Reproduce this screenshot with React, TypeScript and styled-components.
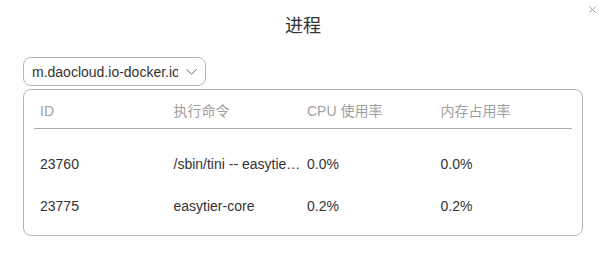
import { createGlobalStyle, styled } from 'styled-components'

const rows = [
  { id: '23760', cmd: '/sbin/tini -- easytier-core --config-server udp://', cpu: '0.0%', mem: '0.0%' },
  { id: '23775', cmd: 'easytier-core', cpu: '0.2%', mem: '0.2%' },
]

function App() {
  return (
    <>
      <GlobalStyle />
      <StyledDialog>
        <StyledClose aria-label="关闭">
          <svg width="7" height="7" viewBox="0 0 7 7">
            <path d="M0.5 0.5 L6.5 6.5 M6.5 0.5 L0.5 6.5" stroke="#9a9a9a" strokeWidth="1" fill="none" />
          </svg>
        </StyledClose>
        <StyledTitle>进程</StyledTitle>
        <StyledSelect>
          <StyledSelectText>m.daocloud.io-docker.io/easytier/easytier</StyledSelectText>
          <svg width="11" height="6" viewBox="0 0 11 6">
            <path d="M0.5 0.5 L5.5 5.2 L10.5 0.5" stroke="#666" strokeWidth="1" fill="none" />
          </svg>
        </StyledSelect>
        <StyledCard>
          <StyledHeadRow>
            <StyledHeadCell>ID</StyledHeadCell>
            <StyledHeadCell>执行命令</StyledHeadCell>
            <StyledHeadCell>CPU 使用率</StyledHeadCell>
            <StyledHeadCell>内存占用率</StyledHeadCell>
          </StyledHeadRow>
          <StyledBody>
            {rows.map((row) => (
              <StyledRow key={row.id}>
                <StyledCell>{row.id}</StyledCell>
                <StyledCell>{row.cmd}</StyledCell>
                <StyledCell>{row.cpu}</StyledCell>
                <StyledCell>{row.mem}</StyledCell>
              </StyledRow>
            ))}
          </StyledBody>
        </StyledCard>
      </StyledDialog>
    </>
  )
}

const GlobalStyle = createGlobalStyle`
  body {
    margin: 0;
    background: #fff;
    font-family: "Liberation Sans", Arial, "Noto Sans CJK SC", sans-serif;
    color: #333;
  }
`

const StyledDialog = styled.div`
  position: relative;
  width: 599px;
  height: 270px;
  box-sizing: border-box;
  padding: 14px 16px 0 23px;
  display: flex;
  flex-direction: column;
  align-items: flex-start;
`

const StyledClose = styled.button`
  position: absolute;
  top: 6px;
  right: 3px;
  padding: 0;
  border: 0;
  background: none;
  display: flex;
  cursor: pointer;
`

const StyledTitle = styled.div`
  align-self: stretch;
  text-align: center;
  font-size: 18px;
  line-height: 24px;
  color: #333;
  margin-bottom: 19px;
`

const StyledSelect = styled.div`
  width: 183px;
  height: 29px;
  box-sizing: border-box;
  border: 1px solid #b5b5b5;
  border-radius: 8px;
  padding: 0 8px;
  display: flex;
  align-items: center;
  justify-content: space-between;
  margin-bottom: 3px;
`

const StyledSelectText = styled.span`
  flex: 0 0 146px;
  overflow: hidden;
  white-space: nowrap;
  font-size: 14px;
  color: #333;
`

const StyledCard = styled.div`
  align-self: stretch;
  border: 1px solid #b5b5b5;
  border-radius: 8px;
  padding: 0 10px 8px;
`

const StyledHeadRow = styled.div`
  display: grid;
  grid-template-columns: repeat(4, 133.5px);
  padding: 11px 0 7px;
  border-bottom: 1px solid #ababab;
`

const StyledHeadCell = styled.div`
  padding: 0 0 0 6px;
  font-size: 14px;
  line-height: 20px;
  color: #a0a0a0;
  white-space: nowrap;
`

const StyledBody = styled.div`
  padding-top: 14px;
`

const StyledRow = styled.div`
  display: grid;
  grid-template-columns: repeat(4, 133.5px);
  height: 42px;
  align-items: center;
`

const StyledCell = styled.div`
  padding: 0 0 0 6px;
  font-size: 14px;
  line-height: 20px;
  color: #333;
  white-space: nowrap;
  overflow: hidden;
  text-overflow: ellipsis;
`

export default App
